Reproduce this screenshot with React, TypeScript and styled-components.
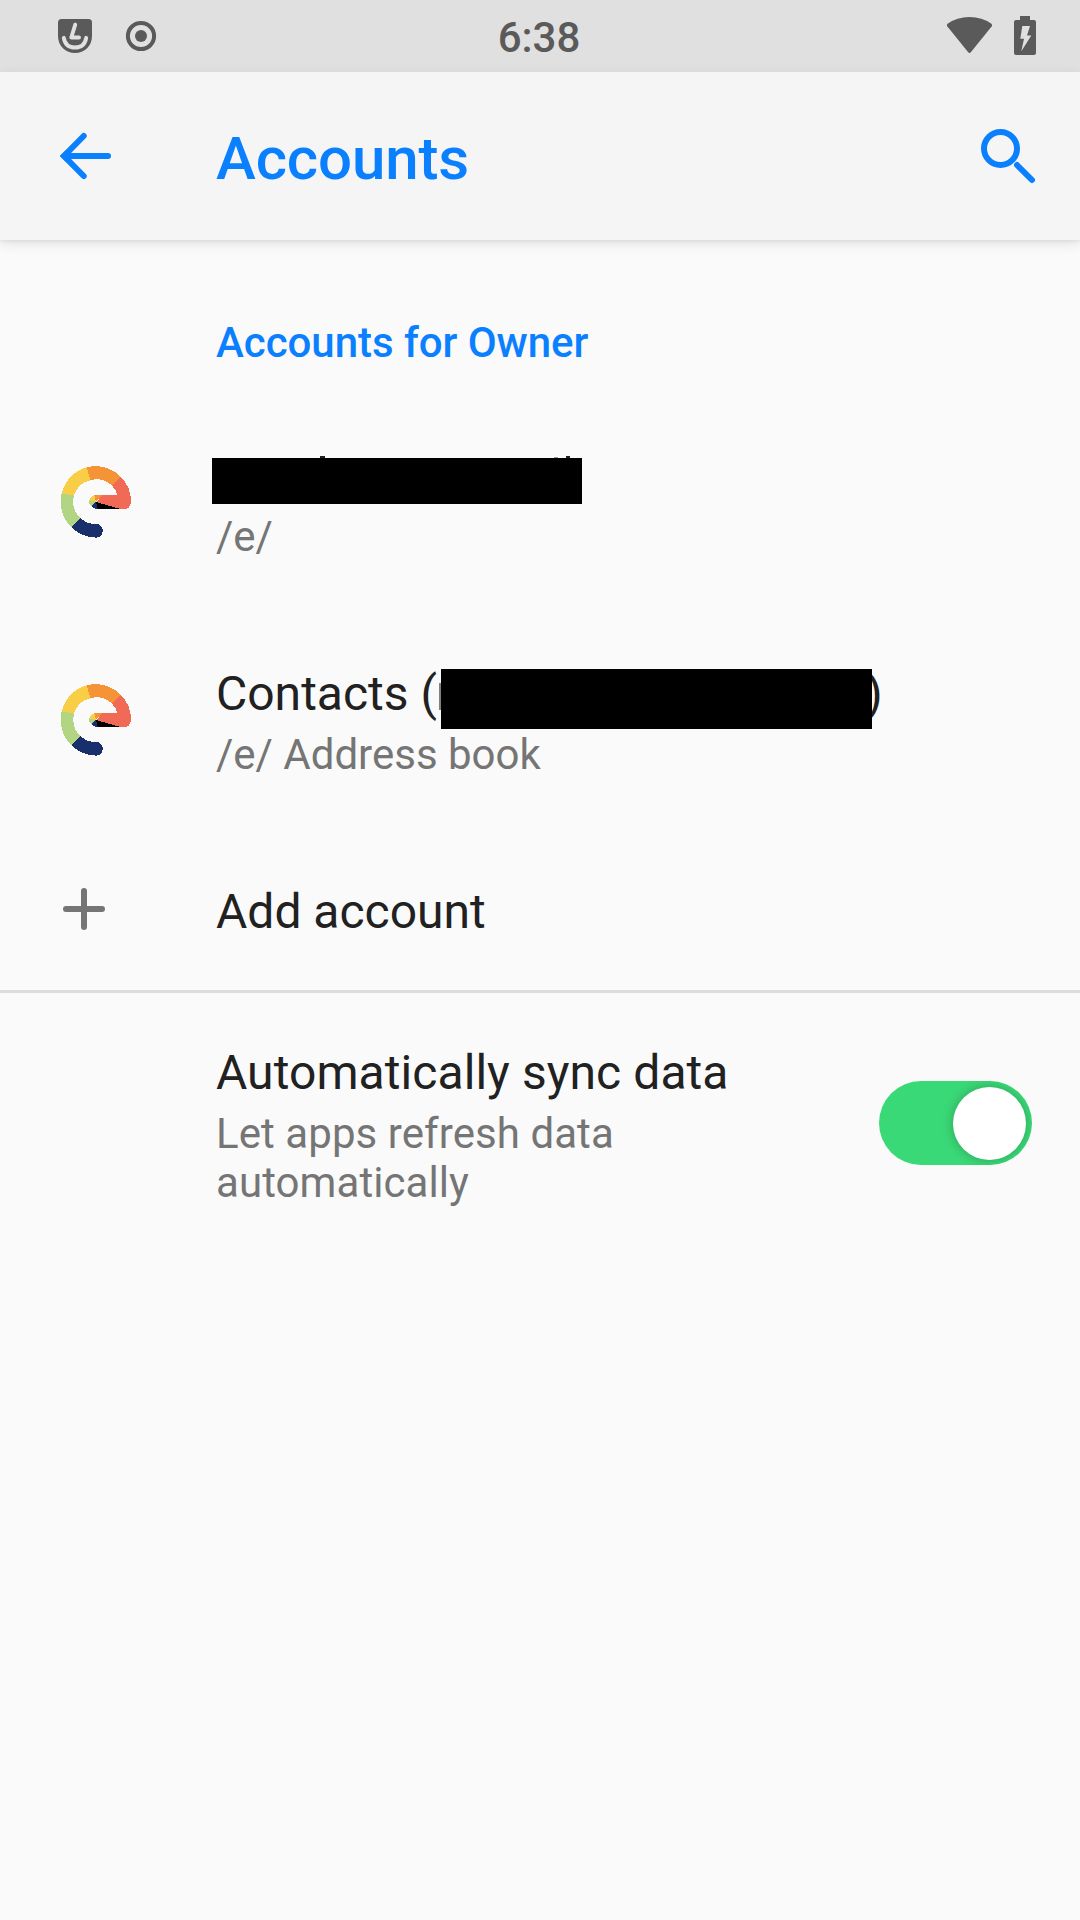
import React from "react";
import styled, { createGlobalStyle } from "styled-components";

const GlobalStyle = createGlobalStyle`
  body {
    margin: 0;
    background: #fafafa;
    font-family: Roboto, "Noto Sans", sans-serif;
  }
`;

const Screen = styled.div`
  display: flex;
  flex-direction: column;
  width: 1080px;
  height: 1920px;
  background: #fafafa;
  color: #212121;
  overflow: hidden;
`;

const StatusBar = styled.header`
  display: grid;
  grid-template-columns: 1fr auto 1fr;
  height: 72px;
  flex: none;
  background: #e0e0e0;
  color: #5a5a5a;
`;

const StatusGroup = styled.div<{ $end?: boolean }>`
  display: flex;
  justify-content: ${(p) => (p.$end ? "flex-end" : "flex-start")};
`;

const Clock = styled.time`
  padding: 13px 2px 0 0;
  font-size: 42px;
  line-height: 49px;
  font-weight: 500;
`;

const Icon = styled.svg`
  display: block;
  flex: none;
`;

const AppBar = styled.nav`
  display: flex;
  height: 168px;
  flex: none;
  background: #f5f5f5;
  color: #0a80ff;
  box-shadow: 0 2px 3px rgba(0, 0, 0, 0.06), 0 4px 12px rgba(0, 0, 0, 0.09);
`;

const BarButton = styled.button<{ $width: number }>`
  width: ${(p) => p.$width}px;
  height: 168px;
  padding: 0;
  border: 0;
  background: none;
  color: inherit;
`;

const PageTitle = styled.h1`
  flex: 1;
  margin: 0;
  padding-top: 52px;
  font-size: 60px;
  line-height: 70px;
  font-weight: 500;
  letter-spacing: -0.12px;
`;

const SectionTitle = styled.h2`
  height: 75px;
  margin: 0;
  padding: 78px 0 0 216px;
  font-size: 42px;
  line-height: 49px;
  font-weight: 500;
  letter-spacing: -0.04px;
  color: #0a80ff;
`;

const Row = styled.div<{ $height: number; $top: number }>`
  display: flex;
  box-sizing: border-box;
  height: ${(p) => p.$height}px;
  padding-top: ${(p) => p.$top}px;
`;

const Lead = styled.div`
  width: 216px;
  flex: none;
`;

const LogoInset = styled.div`
  padding: 2px 0 0 40px;
`;

const Copy = styled.div<{ $tracking?: number }>`
  display: flex;
  flex-direction: column;
  gap: 8px;
  width: 615px;
  letter-spacing: ${(p) => p.$tracking ?? 0}px;
`;

const Title = styled.div`
  position: relative;
  height: 56px;
  font-size: 48px;
  line-height: 56px;
  white-space: pre;
`;

const Summary = styled.div`
  font-size: 42px;
  line-height: 49px;
  color: #757575;
`;

const Redaction = styled.span<{ $x: number; $y: number; $w: number; $h: number }>`
  position: absolute;
  left: ${(p) => p.$x}px;
  top: ${(p) => p.$y}px;
  width: ${(p) => p.$w}px;
  height: ${(p) => p.$h}px;
  background: #000;
`;

const Tick = styled(Redaction)<{ $tone: string }>`
  background: ${(p) => p.$tone};
`;

const ClosingParen = styled.span`
  position: absolute;
  left: 650px;
`;

const Divider = styled.hr`
  width: 100%;
  height: 3px;
  margin: 0;
  border: 0;
  background: #dcdcdc;
`;

const Switch = styled.div`
  display: flex;
  justify-content: flex-end;
  box-sizing: border-box;
  width: 153px;
  height: 84px;
  margin: 36px 0 0 48px;
  padding: 6px;
  border-radius: 42px;
  background: #3ad977;
  overflow: hidden;
`;

const Knob = styled.span`
  width: 73px;
  height: 73px;
  border-radius: 50%;
  background: #fff;
  box-shadow: 0 0 12px rgba(0, 0, 0, 0.26);
`;

const EIcon = () => (
  <Icon width="110" height="100" viewBox="0 0 330 300" shapeRendering="crispEdges">
    <path d="M95 232A106 106 0 0 1 65 130L102 137A66 66 0 0 0 122 205Z" fill="#b2d583" />
    <path d="M65 130A106 106 0 0 1 140 52L151 91A66 66 0 0 0 102 137Z" fill="#f8ce46" />
    <path d="M140 52A106 106 0 0 1 242 80L216 107A66 66 0 0 0 151 91Z" fill="#f59337" />
    <path d="M242 80A106 106 0 0 1 273 156Q271 177 252 177H240L168 157L188 135H232Q228 119 216 107Z" fill="#f06a55" />
    <path d="M95 232L122 205A66 66 0 0 0 168 222A20.500 20.500 0 0 1 168 263A106 106 0 0 1 95 232Z" fill="#192f6c" />
    <path d="M168 156L163 136Q166 135 168 135H188Z" fill="#f59337" />
    <path d="M168 156L148 151Q151 139 163 136Z" fill="#f8ce46" />
    <path d="M168 156L154 169Q146 161 148 151Z" fill="#b2d583" />
    <path d="M168 156L173 177Q161 177 154 169Z" fill="#192f6c" />
    <path d="M168 156L242 177H173Z" fill="#000" />
  </Icon>
);

export default function App() {
  return (
    <>
      <GlobalStyle />
      <Screen>
        <StatusBar>
          <StatusGroup>
            <Icon width="180" height="72" viewBox="0 0 180 72" fill="none">
              <path d="M61.500 19H88.500Q92 19 92 22.500V36C92 46 84.500 53 75 53S58 46 58 36V22.500Q58 19 61.500 19Z" fill="#5a5a5a" />
              <path d="M75.200 24.700L71.300 37.500H79" stroke="#e0e0e0" strokeWidth="3.900" strokeLinecap="round" strokeLinejoin="round" />
              <path d="M63.800 37.800C65 44.500 69 47.500 75 47.500S85 44.500 86.200 37.800" stroke="#e0e0e0" strokeWidth="3.900" strokeLinecap="round" />
              <circle cx="141" cy="36" r="13.100" stroke="#5a5a5a" strokeWidth="4" />
              <circle cx="141" cy="36" r="6" fill="#5a5a5a" />
            </Icon>
          </StatusGroup>
          <Clock>6:38</Clock>
          <StatusGroup $end>
            <Icon width="150" height="72" viewBox="930 0 150 72">
              <path d="M947.200 26.200Q946.200 24.800 947.600 23.700Q957 17 969.500 17T991.400 23.700Q992.800 24.800 991.800 26.200L971 52Q969.500 53.800 968 52Z" fill="#5a5a5a" />
              <path d="M1020 16H1030V20H1034Q1036 20 1036 22V53Q1036 55 1034 55H1016Q1014 55 1014 53V22Q1014 20 1016 20H1020Z" fill="#5a5a5a" />
              <path d="M1022.300 26H1030L1027 35.500H1031.300L1021.300 51.300L1024 38.700H1020.300Z" fill="#e0e0e0" />
            </Icon>
          </StatusGroup>
        </StatusBar>

        <AppBar>
          <BarButton $width={216} aria-label="Back">
            <Icon width="216" height="168" viewBox="0 72 216 168" fill="none" stroke="currentColor" strokeWidth="6" strokeLinecap="round">
              <path d="M83.700 136L64 156L83.700 176M64 156H108" />
              <path d="M66 150L60 156L66 162Z" fill="currentColor" stroke="none" />
            </Icon>
          </BarButton>
          <PageTitle>Accounts</PageTitle>
          <BarButton $width={130} aria-label="Search">
            <Icon width="130" height="168" viewBox="950 72 130 168" fill="none" stroke="currentColor" strokeWidth="6">
              <circle cx="1000.500" cy="148.500" r="16.500" />
              <path d="M1017 165L1032 180" strokeLinecap="round" />
            </Icon>
          </BarButton>
        </AppBar>

        <SectionTitle>Accounts for Owner</SectionTitle>

        <Row $height={218} $top={55}>
          <Lead>
            <LogoInset>
              <EIcon />
            </LogoInset>
          </Lead>
          <Copy>
            <Title>
              <Tick $x={104} $y={8} $w={5} $h={3} $tone="#212121" />
              <Tick $x={338} $y={9} $w={4} $h={1} $tone="#999" />
              <Tick $x={350} $y={8} $w={4} $h={3} $tone="#212121" />
              <Redaction $x={-4} $y={10} $w={370} $h={46} />
            </Title>
            <Summary>/e/</Summary>
          </Copy>
        </Row>

        <Row $height={218} $top={55}>
          <Lead>
            <LogoInset>
              <EIcon />
            </LogoInset>
          </Lead>
          <Copy>
            <Title>
              Contacts (
              <Tick $x={223} $y={17} $w={2} $h={27} $tone="#808080" />
              <ClosingParen>)</ClosingParen>
              <Redaction $x={225} $y={3} $w={431} $h={60} />
            </Title>
            <Summary>/e/ Address book</Summary>
          </Copy>
        </Row>

        <Row $height={161} $top={55}>
          <Lead>
            <Icon width="216" height="56" viewBox="0 884 216 56" fill="none" stroke="#757575" strokeWidth="6" strokeLinecap="round">
              <path d="M66 909H102M84 891V927" />
            </Icon>
          </Lead>
          <Title>Add account</Title>
        </Row>

        <Divider />

        <Row $height={250} $top={52}>
          <Lead />
          <Copy $tracking={0.07}>
            <Title>Automatically sync data</Title>
            <Summary>Let apps refresh data automatically</Summary>
          </Copy>
          <Switch role="switch" aria-checked="true">
            <Knob />
          </Switch>
        </Row>
      </Screen>
    </>
  );
}
